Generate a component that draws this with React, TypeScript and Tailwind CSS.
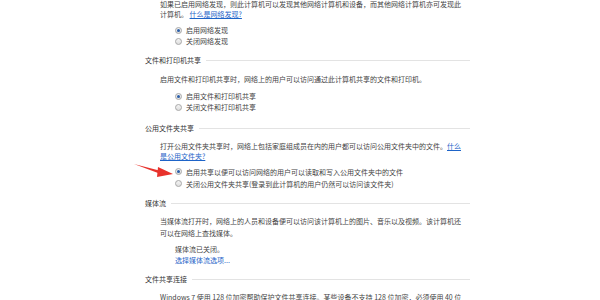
import React from 'react';

const Radio = ({ checked, label }: { checked?: boolean; label: string }) => (
  <label className="flex items-center gap-[4px] h-[11px]">
    <span className="w-[7px] h-[7px] rounded-full border border-[#a8a8a8] bg-gradient-to-b from-[#f4f4f4] to-[#dedede] flex items-center justify-center">
      {checked && <span className="w-[3px] h-[3px] rounded-full bg-[#2a5ea8]" />}
    </span>
    <span>{label}</span>
  </label>
);

const Header = ({ title, className = '' }: { title: string; className?: string }) => (
  <div className={`flex items-center gap-[5px] h-[11px] text-[#333] ${className}`}>
    <span>{title}</span>
    <span className="flex-1 h-px bg-[#e3e3e3]" />
  </div>
);

const Link = ({ children }: { children: React.ReactNode }) => (
  <span className="text-[#1e64c8] underline underline-offset-1">{children}</span>
);

export default function App() {
  return (
    <div
      className="relative w-[600px] h-[300px] overflow-hidden bg-white text-[7px] leading-[11px] text-[#444]"
      style={{ fontFamily: '"Noto Sans CJK SC", "Noto Sans", sans-serif' }}
    >
      <div className="ml-[145px] w-[325px] -mt-[1px]">
        <div className="pl-[15px] pr-[6px]">
          <p className="leading-[10px]">
            如果已启用网络发现，则此计算机可以发现其他网络计算机和设备，而其他网络计算机亦可发现此计算机。 <Link>什么是网络发现?</Link>
          </p>
          <div className="pl-[15px] mt-[6px]">
            <Radio checked label="启用网络发现" />
            <Radio label="关闭网络发现" />
          </div>
        </div>

        <Header title="文件和打印机共享" className="mt-[8px]" />
        <div className="pl-[15px] pr-[6px]">
          <p className="mt-[8px]">启用文件和打印机共享时，网络上的用户可以访问通过此计算机共享的文件和打印机。</p>
          <div className="pl-[15px] mt-[6px]">
            <Radio checked label="启用文件和打印机共享" />
            <Radio label="关闭文件和打印机共享" />
          </div>
        </div>

        <Header title="公用文件夹共享" className="mt-[10px]" />
        <div className="pl-[15px] pr-[6px]">
          <p className="mt-[7px] leading-[10px]">
            打开公用文件夹共享时，网络上包括家庭组成员在内的用户都可以访问公用文件夹中的文件。<Link>什么是公用文件夹?</Link>
          </p>
          <div className="pl-[15px] mt-[5px] leading-[12px]">
            <Radio checked label="启用共享以便可以访问网络的用户可以读取和写入公用文件夹中的文件" />
            <div className="mt-px">
              <Radio label="关闭公用文件夹共享(登录到此计算机的用户仍然可以访问该文件夹)" />
            </div>
          </div>
        </div>

        <Header title="媒体流" className="mt-[9px]" />
        <div className="pl-[15px] pr-[6px]">
          <p className="mt-[6px] leading-[12px]">
            当媒体流打开时，网络上的人员和设备便可以访问该计算机上的图片、音乐以及视频。该计算机还可以在网络上查找媒体。
          </p>
          <div className="pl-[15px] mt-[5px]">
            <div>媒体流已关闭。</div>
            <div className="text-[#1e64c8]">选择媒体流选项...</div>
          </div>
        </div>

        <Header title="文件共享连接" className="mt-[8px]" />
        <div className="pl-[15px] pr-[6px]">
          <p className="mt-[7px]">
            Windows 7 使用 128 位加密帮助保护文件共享连接。某些设备不支持 128 位加密，必须使用 40 位或 56 位加密。
          </p>
        </div>
      </div>

      <svg className="absolute left-[133px] top-[162px]" width="42" height="16" viewBox="0 0 42 16">
        <path d="M1 2 L30 9.5 L29 12.5 Z" fill="#e8322c" />
        <path d="M25 5 L40 12 L24 15 Z" fill="#e8322c" />
      </svg>
    </div>
  );
}
